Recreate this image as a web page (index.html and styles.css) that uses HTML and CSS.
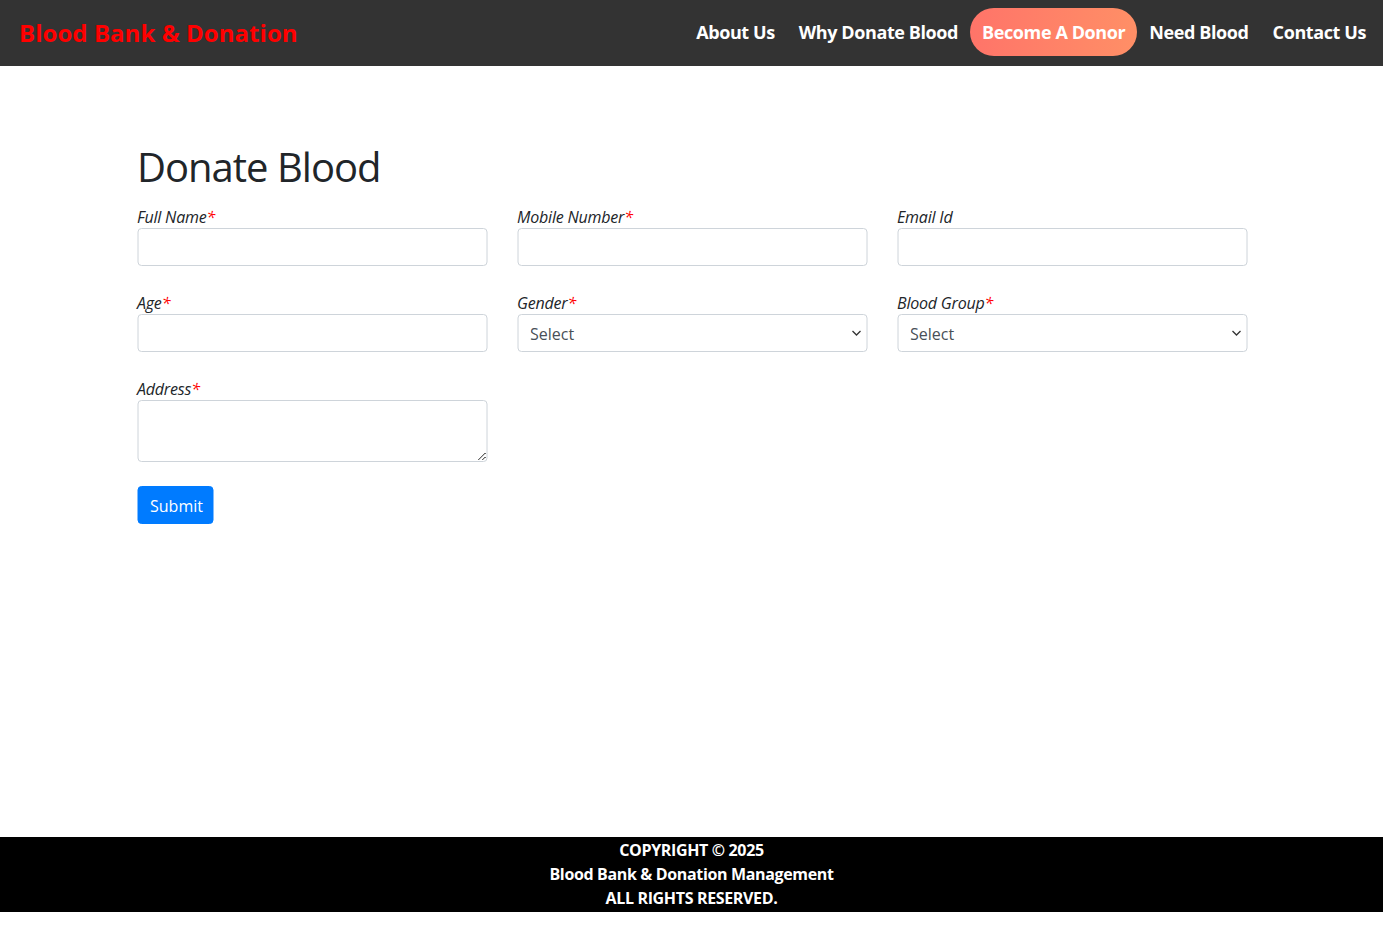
FILE: index.html
```html
<!DOCTYPE html>
<html lang="en">
<head>
<meta charset="utf-8">
<title>Blood Bank &amp; Donation</title>
<link rel="stylesheet" href="styles.css">
</head>
<body>
<header class="navbar">
  <a class="brand" href="#">Blood Bank &amp; Donation</a>
  <nav class="nav">
    <a class="nav-link" href="#">About Us</a>
    <a class="nav-link" href="#">Why Donate Blood</a>
    <a class="nav-link active" href="#">Become A Donor</a>
    <a class="nav-link" href="#">Need Blood</a>
    <a class="nav-link" href="#">Contact Us</a>
  </nav>
</header>
<main class="main">
  <div class="container">
    <h1 class="title">Donate Blood</h1>
    <form class="form">
      <div class="row">
        <div class="group">
          <label class="label">Full Name<span class="req">*</span></label>
          <input class="control" type="text">
        </div>
        <div class="group">
          <label class="label">Mobile Number<span class="req">*</span></label>
          <input class="control" type="text">
        </div>
        <div class="group">
          <label class="label">Email Id</label>
          <input class="control" type="email">
        </div>
      </div>
      <div class="row">
        <div class="group">
          <label class="label">Age<span class="req">*</span></label>
          <input class="control" type="text">
        </div>
        <div class="group">
          <label class="label">Gender<span class="req">*</span></label>
          <select class="control select"><option>Select</option></select>
        </div>
        <div class="group">
          <label class="label">Blood Group<span class="req">*</span></label>
          <select class="control select"><option>Select</option></select>
        </div>
      </div>
      <div class="row">
        <div class="group">
          <label class="label">Address<span class="req">*</span></label>
          <textarea class="control textarea"></textarea>
        </div>
      </div>
      <button class="btn" type="button">Submit</button>
    </form>
  </div>
</main>
<footer class="footer">
  <p>COPYRIGHT &copy; 2025</p>
  <p>Blood Bank &amp; Donation Management</p>
  <p>ALL RIGHTS RESERVED.</p>
</footer>
</body>
</html>
```
FILE: styles.css
```css
* { box-sizing: border-box; }
html, body { margin: 0; padding: 0; }
body {
  font-family: "Open Sans", "Noto Sans", "Liberation Sans", sans-serif;
  font-size: 16px;
  line-height: 1.5;
  color: #212529;
  background: #fff;
}
.navbar {
  height: 66px;
  background: #333;
  display: flex;
  align-items: center;
  justify-content: space-between;
  padding: 0 5px 0 19px;
}
.brand {
  color: #ff0000;
  font-weight: 700;
  font-size: 24px;
  text-decoration: none;
  letter-spacing: 0.05px;
}
.nav { display: flex; align-items: center; margin-top: -3px; }
.nav-link {
  color: #fff;
  font-weight: 700;
  font-size: 18px;
  text-decoration: none;
  padding: 10px 12px;
  line-height: 28px;
  letter-spacing: -0.4px;
}
.nav-link.active {
  background: linear-gradient(90deg, #ff7469, #ff8f66);
  border-radius: 24px;
}
.main { height: 771px; padding-top: 77px; }
.container { width: 1110px; margin: 0 auto; transform: translateX(0.5px); }
.title {
  font-size: 40px;
  font-weight: 400;
  line-height: 48px;
  margin: 0 0 13px;
  letter-spacing: -1px;
}
.row { display: flex; gap: 30px; margin-bottom: 24px; }
.group { width: 350px; display: flex; flex-direction: column; }
.label { font-style: italic; line-height: 22px; padding-top: 2px; letter-spacing: -0.2px; }
.req { color: #ff0000; }
.control {
  height: 38px;
  border: 1px solid #ced4da;
  border-radius: 4px;
  font-family: inherit;
  font-size: 16px;
  color: #495057;
  background: #fff;
  padding: 7px 12px 5px;
}
.select {
  appearance: none;
  -webkit-appearance: none;
  background-image: url("data:image/svg+xml,%3Csvg xmlns='http://www.w3.org/2000/svg' width='10' height='6' viewBox='0 0 10 6'%3E%3Cpath d='M1 1l4 4 4-4' fill='none' stroke='%23333' stroke-width='1.3'/%3E%3C/svg%3E");
  background-repeat: no-repeat;
  background-position: right 5px center;
}
.textarea { height: 62px; resize: vertical; }
.btn {
  background: #007bff;
  color: #fff;
  border: 1px solid #007bff;
  border-radius: 4px;
  font-family: inherit;
  font-size: 16px;
  height: 38px;
  padding: 1px 12px 0;
  width: 76px;
}
.footer {
  background: #000;
  color: #fff;
  text-align: center;
  font-weight: 700;
  height: 75px;
  padding-top: 1px;
  letter-spacing: -0.35px;
}
.footer p { margin: 0; line-height: 24px; }
```
